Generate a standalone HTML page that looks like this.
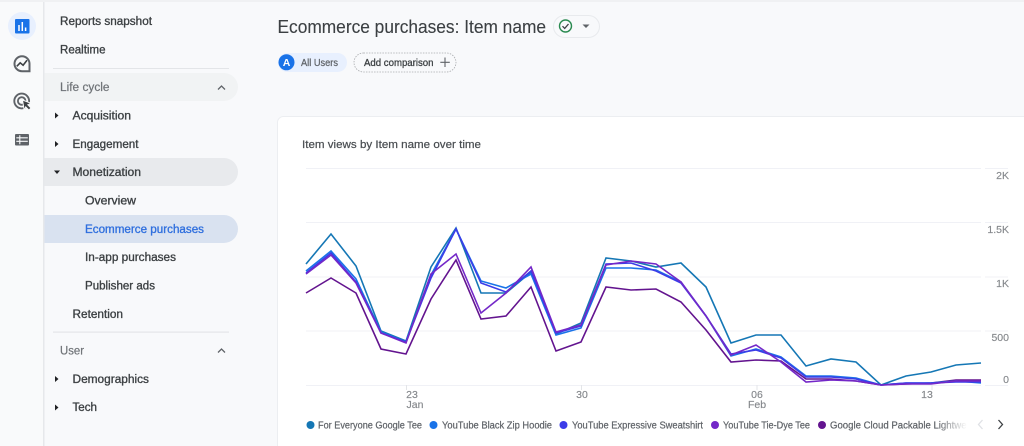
<!DOCTYPE html>
<html><head><meta charset="utf-8"><style>
html,body{margin:0;padding:0;width:1024px;height:446px;overflow:hidden;background:#f8f9fb}
svg{display:block;position:absolute;left:0;top:0;filter:blur(.35px)}
text{font-family:"Liberation Sans",sans-serif}
.n{font-size:11.5px;fill:#3c4043;stroke:#3c4043;stroke-width:.32px}
.h{font-size:11.5px;fill:#6f7377;stroke:#6f7377;stroke-width:.2px}
.l{font-size:10px;fill:#5f6368;stroke:#5f6368;stroke-width:.22px}
.a{font-size:10.5px;fill:#85888c;stroke:#85888c;stroke-width:.15px}
.g{stroke:#f0f1f6;stroke-width:1.1;fill:none}
.s{fill:none;stroke-width:1.6;stroke-linejoin:miter}
</style></head><body>
<svg width="1024" height="446" viewBox="0 0 1024 446" xmlns="http://www.w3.org/2000/svg">
<defs><linearGradient id="fd" x1="0" x2="1" y1="0" y2="0"><stop offset="0" stop-color="#fff" stop-opacity="0"/><stop offset="1" stop-color="#fff"/></linearGradient></defs>
<rect width="1024" height="446" fill="#f8f9fb"/>
<rect width="1024" height="2" fill="#f0f1f3"/>
<rect x="0" y="2" width="43" height="444" fill="#f9fafb"/>
<rect x="43" y="2" width="1.5" height="444" fill="#e6e8eb"/>

<!-- rail icons -->
<circle cx="22" cy="26" r="14" fill="#e8f0fe"/>
<rect x="15" y="19" width="14.5" height="14.5" rx="1" fill="#1a73e8"/>
<path d="M19 31V25M22.3 31V22M25.6 31V27.5" stroke="#fff" stroke-width="1.5" fill="none"/>
<g fill="none" stroke="#5f6368" stroke-width="2">
<path d="M22 71.200a7.500 7.500 0 1 1 7.500-7.500V71.200z"/>
<path d="M16.800 66.300l3.400-3.500 2.900 2.400 3.900-5" stroke="#3c4043" stroke-width="1.600"/>
<circle cx="21.700" cy="101" r="7.400" stroke-width="1.900"/>
<circle cx="21.700" cy="101" r="3.800" stroke-width="1.800"/>
</g>
<path d="M22.500 100l8.500 3.300-3.200 1.500 3.200 3.200-2.100 2.100-3.200-3.200-1.500 3.200z" fill="#3c4043" stroke="#f9fafb" stroke-width="1"/>
<rect x="15" y="134" width="14" height="11.500" rx="1" fill="#5f6368"/>
<path d="M16.300 137.800H27.800M16.300 141.300H27.800M19.800 135.300v9" stroke="#f9fafb" stroke-width="1.100" fill="none"/>

<!-- nav -->
<rect x="53" y="68" width="176" height="1" fill="#e3e5e8"/>
<rect x="53" y="331.500" width="176" height="1.200" fill="#e3e5e8"/>
<path d="M44.500 73H224a14 14 0 0 1 0 28H44.500z" fill="#f1f3f4"/>
<path d="M44.500 158H224a14 14 0 0 1 0 28H44.500z" fill="#e8eaed"/>
<path d="M44.500 215H224a14 14 0 0 1 0 28H44.500z" fill="#d9e2f0"/>

<text class="n" x="60" y="25" textLength="92" lengthAdjust="spacingAndGlyphs">Reports snapshot</text>
<text class="n" x="60" y="53.500" textLength="45.500" lengthAdjust="spacingAndGlyphs">Realtime</text>
<text class="h" x="60" y="91" textLength="49.500" lengthAdjust="spacingAndGlyphs">Life cycle</text>
<text class="n" x="72.500" y="119.500" textLength="58.500" lengthAdjust="spacingAndGlyphs">Acquisition</text>
<text class="n" x="72.500" y="148" textLength="66" lengthAdjust="spacingAndGlyphs">Engagement</text>
<text class="n" x="72.500" y="176" textLength="68.500" lengthAdjust="spacingAndGlyphs">Monetization</text>
<text class="n" x="85" y="204.500" textLength="51" lengthAdjust="spacingAndGlyphs">Overview</text>
<text class="n" x="85" y="233" textLength="119" lengthAdjust="spacingAndGlyphs" style="fill:#2f6fde;stroke:#2f6fde">Ecommerce purchases</text>
<text class="n" x="85" y="261" textLength="91" lengthAdjust="spacingAndGlyphs">In-app purchases</text>
<text class="n" x="85" y="289.500" textLength="70" lengthAdjust="spacingAndGlyphs">Publisher ads</text>
<text class="n" x="72.500" y="318" textLength="50.500" lengthAdjust="spacingAndGlyphs">Retention</text>
<text class="h" x="60" y="354.500" textLength="24" lengthAdjust="spacingAndGlyphs">User</text>
<text class="n" x="72.500" y="383" textLength="76.500" lengthAdjust="spacingAndGlyphs">Demographics</text>
<text class="n" x="72.500" y="411" textLength="24.500" lengthAdjust="spacingAndGlyphs">Tech</text>

<g fill="#202124">
<path d="M55 112.500l3.500 3-3.500 3z"/><path d="M55 141l3.500 3-3.500 3z"/>
<path d="M54 170.500h6l-3 3.500z"/>
<path d="M55 376l3.500 3-3.500 3z"/><path d="M55 404.500l3.500 3-3.500 3z"/>
</g>
<path d="M218 89.500l3.500-3.500 3.500 3.500M218 352.500l3.500-3.500 3.500 3.500" fill="none" stroke="#5f6368" stroke-width="1.300"/>

<!-- header -->
<text x="277.500" y="33" font-size="18.500" fill="#3c4043" stroke="#3c4043" stroke-width=".12" textLength="268.500" lengthAdjust="spacingAndGlyphs">Ecommerce purchases: Item name</text>
<rect x="553.500" y="15.500" width="46" height="22" rx="11" fill="#f8f9fb" stroke="#e8eaed"/>
<circle cx="565.500" cy="26" r="6" fill="none" stroke="#2a8a50" stroke-width="1.400"/>
<path d="M562.500 26.200l2.200 2.200 3.800-4.400" fill="none" stroke="#3c4043" stroke-width="1.300"/>
<path d="M582.500 24.500h7l-3.500 3.500z" fill="#5f6368"/>

<rect x="278" y="53" width="69" height="19" rx="9.500" fill="#e8f0fe"/>
<circle cx="286.500" cy="62.300" r="8" fill="#1a73e8"/>
<text x="286.500" y="66" font-size="10.500" font-weight="bold" fill="#fff" text-anchor="middle">A</text>
<text x="301" y="66" font-size="10.500" fill="#5f6368" stroke="#5f6368" stroke-width=".25" textLength="37" lengthAdjust="spacingAndGlyphs">All Users</text>
<rect x="354" y="53" width="102" height="19" rx="9.500" fill="#f8f9fb" stroke="#a9abae" stroke-width=".8" stroke-dasharray="1.500 1.200"/>
<text x="364" y="66" font-size="10.500" fill="#3c4043" stroke="#3c4043" stroke-width=".3" textLength="69.500" lengthAdjust="spacingAndGlyphs">Add comparison</text>
<path d="M445 57.500v9.500M440.300 62.300h9.500" stroke="#5f6368" stroke-width="1.100" fill="none"/>

<!-- card -->
<rect x="277.500" y="116.500" width="760" height="345" rx="6" fill="#fff" stroke="#eceef1"/>
<text x="302" y="148" font-size="11" fill="#4a4e52" stroke="#4a4e52" stroke-width=".22" textLength="179" lengthAdjust="spacingAndGlyphs">Item views by Item name over time</text>

<!-- grid -->
<path class="g" d="M306 168.500H981M985 168.500H1008M306 222.500H981M985 222.500H1008M306 277H981M985 277H1008M306 331H981M985 331H1008M306 385.500H981M985 385.500H1008"/>
<path d="M406.500 385v5M581.500 385v5M757 385v5M932 385v5" stroke="#e3e5e8" stroke-width="1"/>
<g class="a">
<text x="1009" y="179" text-anchor="end">2K</text>
<text x="1009" y="233" text-anchor="end">1.5K</text>
<text x="1009" y="287" text-anchor="end">1K</text>
<text x="1009" y="341" text-anchor="end">500</text>
<text x="1009" y="383" text-anchor="end">0</text>
<text x="412" y="398" text-anchor="middle">23</text>
<text x="415" y="408" text-anchor="middle">Jan</text>
<text x="582" y="398" text-anchor="middle">30</text>
<text x="757" y="398" text-anchor="middle">06</text>
<text x="757" y="408" text-anchor="middle">Feb</text>
<text x="927" y="398" text-anchor="middle">13</text>
</g>

<!-- series -->
<polyline class="s" stroke="#63148f" points="306,293 331,278 356,293 381,349 406,354 431,299 456,260 481,319 506,316 531,287 556,351 581,342 606,287 631,290 656,289 681,302 706,330 731,362 756,360 781,361 806,379 831,379 856,381 881,385 906,384 931,383 956,380 981,380"/>
<polyline class="s" stroke="#1577b5" points="306,264 331,234 356,266 381,331 406,341 431,267 456,228 481,293 506,293 531,272 556,334 581,323 606,258 631,261 656,267 681,263 706,287 731,343 756,335 781,335 806,366 831,359 856,362 881,385 906,376 931,372 956,365 981,363"/>
<polyline class="s" stroke="#1a73e8" points="306,271 331,251 356,279 381,332 406,342 431,275 456,229 481,281 506,288 531,274 556,335 581,328 606,268 631,268 656,270 681,282 706,316 731,356 756,349 781,357 806,376 831,376 856,378 881,385 906,383 931,383 956,381 981,383"/>
<polyline class="s" stroke="#3c3ce8" points="306,273 331,253 356,282 381,333 406,342 431,278 456,229 481,283 506,292 531,271 556,333 581,326 606,264 631,263 656,271 681,283 706,316 731,354 756,350 781,358 806,377 831,377 856,379 881,385 906,383 931,383 956,382 981,382"/>
<polyline class="s" stroke="#7428c8" points="306,274 331,255 356,283 381,333 406,343 431,274 456,254 481,313 506,293 531,267 556,332 581,325 606,265 631,261 656,264 681,282 706,316 731,355 756,345 781,362 806,382 831,380 856,381 881,385 906,384 931,384 956,381 981,381"/>

<!-- legend -->
<circle cx="310.500" cy="425" r="4" fill="#1577b5"/>
<text class="l" x="318" y="428.500" textLength="104" lengthAdjust="spacingAndGlyphs">For Everyone Google Tee</text>
<circle cx="433.500" cy="425" r="4" fill="#1a73e8"/>
<text class="l" x="442" y="428.500" textLength="110" lengthAdjust="spacingAndGlyphs">YouTube Black Zip Hoodie</text>
<circle cx="563.500" cy="425" r="4" fill="#3c3ce8"/>
<text class="l" x="572" y="428.500" textLength="131" lengthAdjust="spacingAndGlyphs">YouTube Expressive Sweatshirt</text>
<circle cx="715" cy="425" r="4" fill="#7428c8"/>
<text class="l" x="723" y="428.500" textLength="87" lengthAdjust="spacingAndGlyphs">YouTube Tie-Dye Tee</text>
<circle cx="822" cy="425" r="4" fill="#63148f"/>
<text class="l" x="830" y="428.500" textLength="152" lengthAdjust="spacingAndGlyphs">Google Cloud Packable Lightweight</text>
<rect x="935" y="418" width="32" height="16" fill="url(#fd)"/>
<rect x="967" y="418" width="20" height="16" fill="#fff"/>
<path d="M982.500 420l-4 4.500 4 4.500" fill="none" stroke="#dfe1e5" stroke-width="1.300"/>
<path d="M998.500 420l4 4.500-4 4.500" fill="none" stroke="#3c4043" stroke-width="1.300"/>
</svg>
</body></html>
